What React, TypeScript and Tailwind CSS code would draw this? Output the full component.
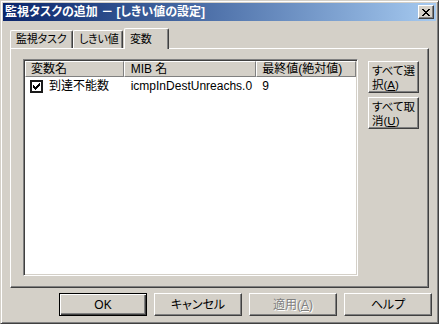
const raised =
  'border border-t-white border-l-white border-r-[#404040] border-b-[#404040] shadow-[inset_-1px_-1px_#808080]'

function CloseGlyph() {
  return (
    <svg width="8" height="7" viewBox="0 0 8 7" shapeRendering="crispEdges">
      <path
        fill="#000"
        d="M0 0h2v1H0zM6 0h2v1H6zM1 1h2v1H1zM5 1h2v1H5zM2 2h4v1H2zM3 3h2v1H3zM2 4h4v1H2zM1 5h2v1H1zM5 5h2v1H5zM0 6h2v1H0zM6 6h2v1H6z"
      />
    </svg>
  )
}

function CheckGlyph() {
  return (
    <svg width="7" height="7" viewBox="0 0 7 7" shapeRendering="crispEdges">
      <path
        fill="#000"
        d="M6 0h1v1H6zM5 1h2v1H5zM0 2h1v1H0zM4 2h3v1H4zM0 3h2v1H0zM3 3h3v1H3zM0 4h5v1H0zM1 5h3v1H1zM2 6h1v1H2z"
      />
    </svg>
  )
}

function Tab({ label, active, width }: { label: string; active?: boolean; width: string }) {
  return (
    <div
      className={
        (active
          ? 'relative z-10 h-[21px] -mb-px pl-[5px] pt-[3px] '
          : 'h-[18px] pl-[5px] pt-[1px] ') +
        width +
        ' shrink-0 whitespace-nowrap text-[11px] tracking-[-0.2px] bg-[#d4d0c8] rounded-t-[2px] border-t border-l border-r border-t-white border-l-white border-r-[#404040] shadow-[inset_-1px_0_#808080] leading-[14px]'
      }
    >
      {label}
    </div>
  )
}

function Button({ children, w, isDefault }: { children: React.ReactNode; w: string; isDefault?: boolean }) {
  return (
    <div
      className={
        w +
        ' h-[23px] flex items-center justify-center leading-[14px] whitespace-nowrap ' +
        (isDefault
          ? 'border border-black shadow-[inset_1px_1px_#fff,inset_-1px_-1px_#404040,inset_-2px_-2px_#808080]'
          : raised)
      }
    >
      {children}
    </div>
  )
}

export default function App() {
  return (
    <div className="w-[439px] h-[324px] bg-[#d4d0c8] border border-t-[#d4d0c8] border-l-[#d4d0c8] border-r-[#404040] border-b-[#404040] shadow-[inset_1px_1px_#fff,inset_-1px_-1px_#808080] p-[2px] flex flex-col text-[12px] text-black font-['Liberation_Sans','Noto_Sans_CJK_JP',sans-serif] [font-feature-settings:'palt'] overflow-hidden">
      {/* title bar */}
      <div className="h-[18px] flex items-center justify-between bg-gradient-to-r from-[#0a246a] to-[#a6caf0] pl-[2px] pr-[2px]">
        <span className="text-white font-bold leading-[14px] whitespace-nowrap">監視タスクの追加 － [しきい値の設定]</span>
        <div className={'w-[16px] h-[14px] bg-[#d4d0c8] flex items-center justify-center ' + raised}>
          <CloseGlyph />
        </div>
      </div>

      {/* tabs */}
      <div className="mt-[7px] h-[20px] flex items-end pl-[7px]">
        <Tab label="監視タスク" width="w-[63px]" />
        <Tab label="しきい値" width="w-[50px]" />
        <div className="w-[1px] shrink-0" />
        <Tab label="変数" width="w-[45px]" active />
      </div>

      {/* tab panel */}
      <div className={'ml-[7px] w-[419px] h-[240px] pl-[12px] pt-[10px] flex ' + raised}>
        {/* list view */}
        <div className="w-[335px] h-[217px] bg-white border border-t-[#808080] border-l-[#808080] border-r-white border-b-white shadow-[inset_1px_1px_#404040,inset_-1px_-1px_#d4d0c8] p-[1px] flex flex-col">
          <div className="h-[16px] flex bg-[#d4d0c8] leading-[14px] whitespace-nowrap">
            <div className="w-[99px] border-t border-l border-r border-b border-t-white border-l-white border-r-[#808080] border-b-[#808080] pl-[5px]">
              変数名
            </div>
            <div className="w-[133px] border-t border-l border-r border-b border-t-white border-l-white border-r-[#808080] border-b-[#808080] pl-[6px]">
              MIB 名
            </div>
            <div className="w-[100px] border-t border-l border-r border-b border-t-white border-l-white border-r-[#808080] border-b-[#808080] pl-[5px]">
              最終値(絶対値)
            </div>
          </div>
          <div className="h-[16px] mt-[1px] flex items-center leading-[14px] whitespace-nowrap">
            <div className="w-[99px] flex items-center pl-[5px]">
              <div className="w-[13px] h-[13px] border-2 border-[#1a1a1a] bg-white flex items-center justify-center">
                <CheckGlyph />
              </div>
              <span className="ml-[6px]">到達不能数</span>
            </div>
            <div className="w-[133px] pl-[7px]">icmpInDestUnreachs.0</div>
            <div className="w-[100px] pl-[6px]">9</div>
          </div>
        </div>

        {/* side buttons */}
        <div className="ml-[10px] mt-[2px] flex flex-col gap-[4px]">
          <div className={'w-[51px] h-[32px] pl-[3px] pt-[2px] leading-[14px] text-[11.5px] whitespace-nowrap ' + raised}>
            すべて選
            <br />
            択(<u>A</u>)
          </div>
          <div className={'w-[51px] h-[32px] pl-[3px] pt-[2px] leading-[14px] text-[11.5px] whitespace-nowrap ' + raised}>
            すべて取
            <br />
            消(<u>U</u>)
          </div>
        </div>
      </div>

      {/* dialog buttons */}
      <div className="mt-[5px] flex justify-end gap-[7px] pr-[4px]">
        <Button w="w-[88px]" isDefault>
          OK
        </Button>
        <Button w="w-[88px]">キャンセル</Button>
        <Button w="w-[88px]">
          <span className="text-[#808080] [text-shadow:1px_1px_#fff]">
            適用(<u>A</u>)
          </span>
        </Button>
        <Button w="w-[88px]">ヘルプ</Button>
      </div>
    </div>
  )
}
